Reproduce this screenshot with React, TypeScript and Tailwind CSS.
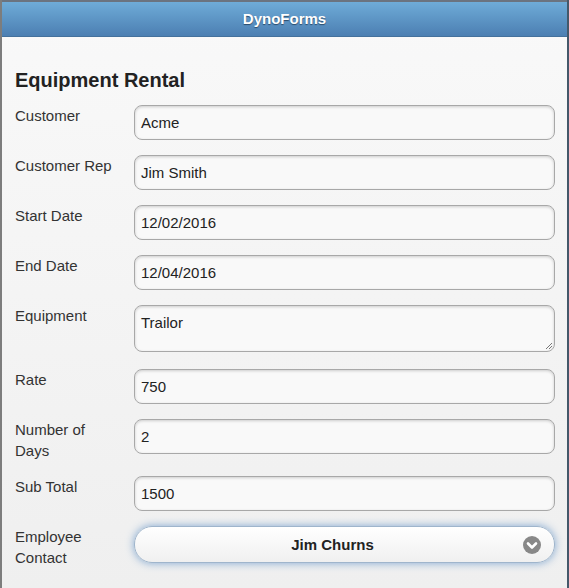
import React from "react";

const font = { fontFamily: '"Liberation Sans", Arial, sans-serif' };

function Row({ label, children, top = "" }: { label: React.ReactNode; children: React.ReactNode; top?: string }) {
  return (
    <div className={`flex items-start ${top}`}>
      <div className="w-[119px] shrink-0 pr-[18px] text-[15px] leading-[21px] text-[#333]">{label}</div>
      <div className="flex-1">{children}</div>
    </div>
  );
}

function Input({ value }: { value: string }) {
  return (
    <div className="h-[35px] rounded-[8px] border border-[#a8a8a8] bg-[#f9f9f9] shadow-[inset_0_1px_3px_rgba(0,0,0,0.18)] flex items-center px-[6px] pt-[1px] text-[15px] text-[#222]">
      {value}
    </div>
  );
}

export default function App() {
  return (
    <div style={font} className="w-[569px] h-[588px] overflow-hidden flex flex-col border-l-2 border-l-[#7d7d7d] border-r-2 border-r-[#44586a] bg-gradient-to-b from-[#f9f9f9] to-[#efefef]">
      <div className="h-[37px] shrink-0 border-t-2 border-t-[#6b7480] border-b border-b-[#44719c] bg-gradient-to-b from-[#6facd8] to-[#4c7fb2] flex items-center justify-center">
        <span className="text-white font-bold text-[15px] [text-shadow:0_1px_1px_#2a4a6a]">DynoForms</span>
      </div>
      <div className="pl-[13px] pr-[12px] pt-[30px]">
        <div className="text-[20px] leading-[26px] font-bold text-[#222] mb-[12px]">Equipment Rental</div>
        <div className="flex flex-col gap-[15px]">
          <Row label="Customer"><Input value="Acme" /></Row>
          <Row label="Customer Rep"><Input value="Jim Smith" /></Row>
          <Row label="Start Date"><Input value="12/02/2016" /></Row>
          <Row label="End Date"><Input value="12/04/2016" /></Row>
          <Row label="Equipment">
            <div className="relative h-[47px] rounded-[8px] border border-[#a8a8a8] bg-[#f9f9f9] shadow-[inset_0_1px_3px_rgba(0,0,0,0.18)] px-[6px] pt-[8px] text-[15px] leading-[18px] text-[#222]">
              Trailor
              <svg className="absolute right-[1px] bottom-[1px]" width="8" height="8" viewBox="0 0 8 8">
                <path d="M7 1 L1 7 M7 4 L4 7" stroke="#777" strokeWidth="1" />
              </svg>
            </div>
          </Row>
          <Row label="Rate" top="mt-[2px]"><Input value="750" /></Row>
          <Row label={<>Number of<br />Days</>}><Input value="2" /></Row>
          <Row label="Sub Total"><Input value="1500" /></Row>
          <Row label={<>Employee<br />Contact</>}>
            <div className="relative h-[37px] rounded-[18px] border border-[#9fb5cc] bg-gradient-to-b from-[#ffffff] to-[#f0f0f0] shadow-[0_0_8px_#7fa6d0] flex items-center justify-center pr-[24px] pt-[1px] text-[15px] font-bold text-[#222]">
              Jim Churns
              <svg className="absolute right-[13px] top-[9px]" width="18" height="18" viewBox="0 0 18 18">
                <circle cx="9" cy="9" r="9" fill="#888" />
                <path d="M5 7.5 L9 11.5 L13 7.5" fill="none" stroke="#fff" strokeWidth="2.6" strokeLinecap="round" strokeLinejoin="round" />
              </svg>
            </div>
          </Row>
        </div>
      </div>
    </div>
  );
}
